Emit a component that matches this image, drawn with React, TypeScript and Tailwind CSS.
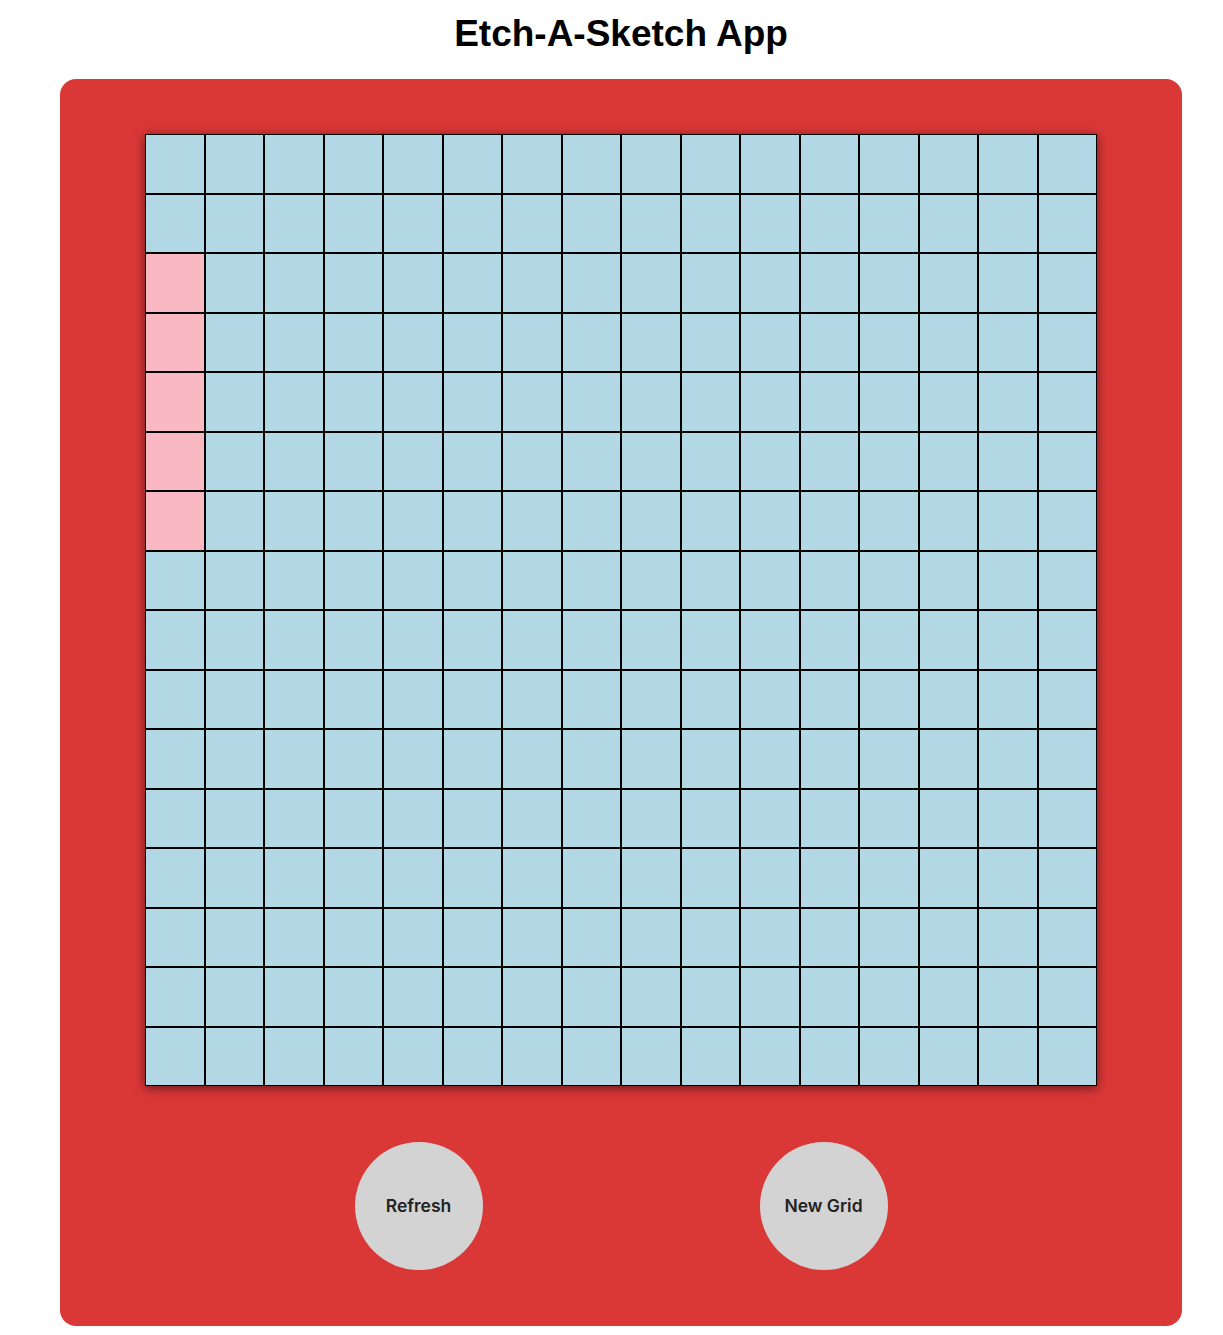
import React from "react";

const pink = new Set([32, 48, 64, 80, 96]);

export default function App() {
  const cells = Array.from({ length: 256 }, (_, i) => i);
  return (
    <div className="min-h-screen bg-white pl-[60px]" style={{ fontFamily: '"Liberation Sans", Arial, sans-serif' }}>
      <div className="w-[1122px] flex flex-col items-center">
        <h1 className="text-[37px] leading-[41px] font-bold text-black mt-[13px] mb-[25px]">Etch-A-Sketch App</h1>
        <div className="w-[1122px] bg-[#da3737] rounded-[16px] pt-[55px] pb-[56px] px-[85px] flex flex-col items-center">
          <div className="w-[952px] h-[952px] grid grid-cols-[repeat(16,1fr)] grid-rows-[repeat(16,1fr)] shadow-[0_2px_10px_rgba(0,0,0,0.55)]">
            {cells.map((i) => (
              <div
                key={i}
                className={`border border-black ${pink.has(i) ? "bg-[#f9b8c2]" : "bg-[#b3d8e5]"}`}
              />
            ))}
          </div>
          <div className="mt-[56px] flex justify-center gap-[277px]">
            <button
              className="w-[128px] h-[128px] rounded-full bg-[#d3d3d3] text-[#222] text-[17.5px] font-semibold flex items-center justify-center"
              style={{ fontFamily: 'Inter, "Liberation Sans", sans-serif' }}
            >
              Refresh
            </button>
            <button
              className="w-[128px] h-[128px] rounded-full bg-[#d3d3d3] text-[#222] text-[17.5px] font-semibold flex items-center justify-center"
              style={{ fontFamily: 'Inter, "Liberation Sans", sans-serif' }}
            >
              New Grid
            </button>
          </div>
        </div>
      </div>
    </div>
  );
}
